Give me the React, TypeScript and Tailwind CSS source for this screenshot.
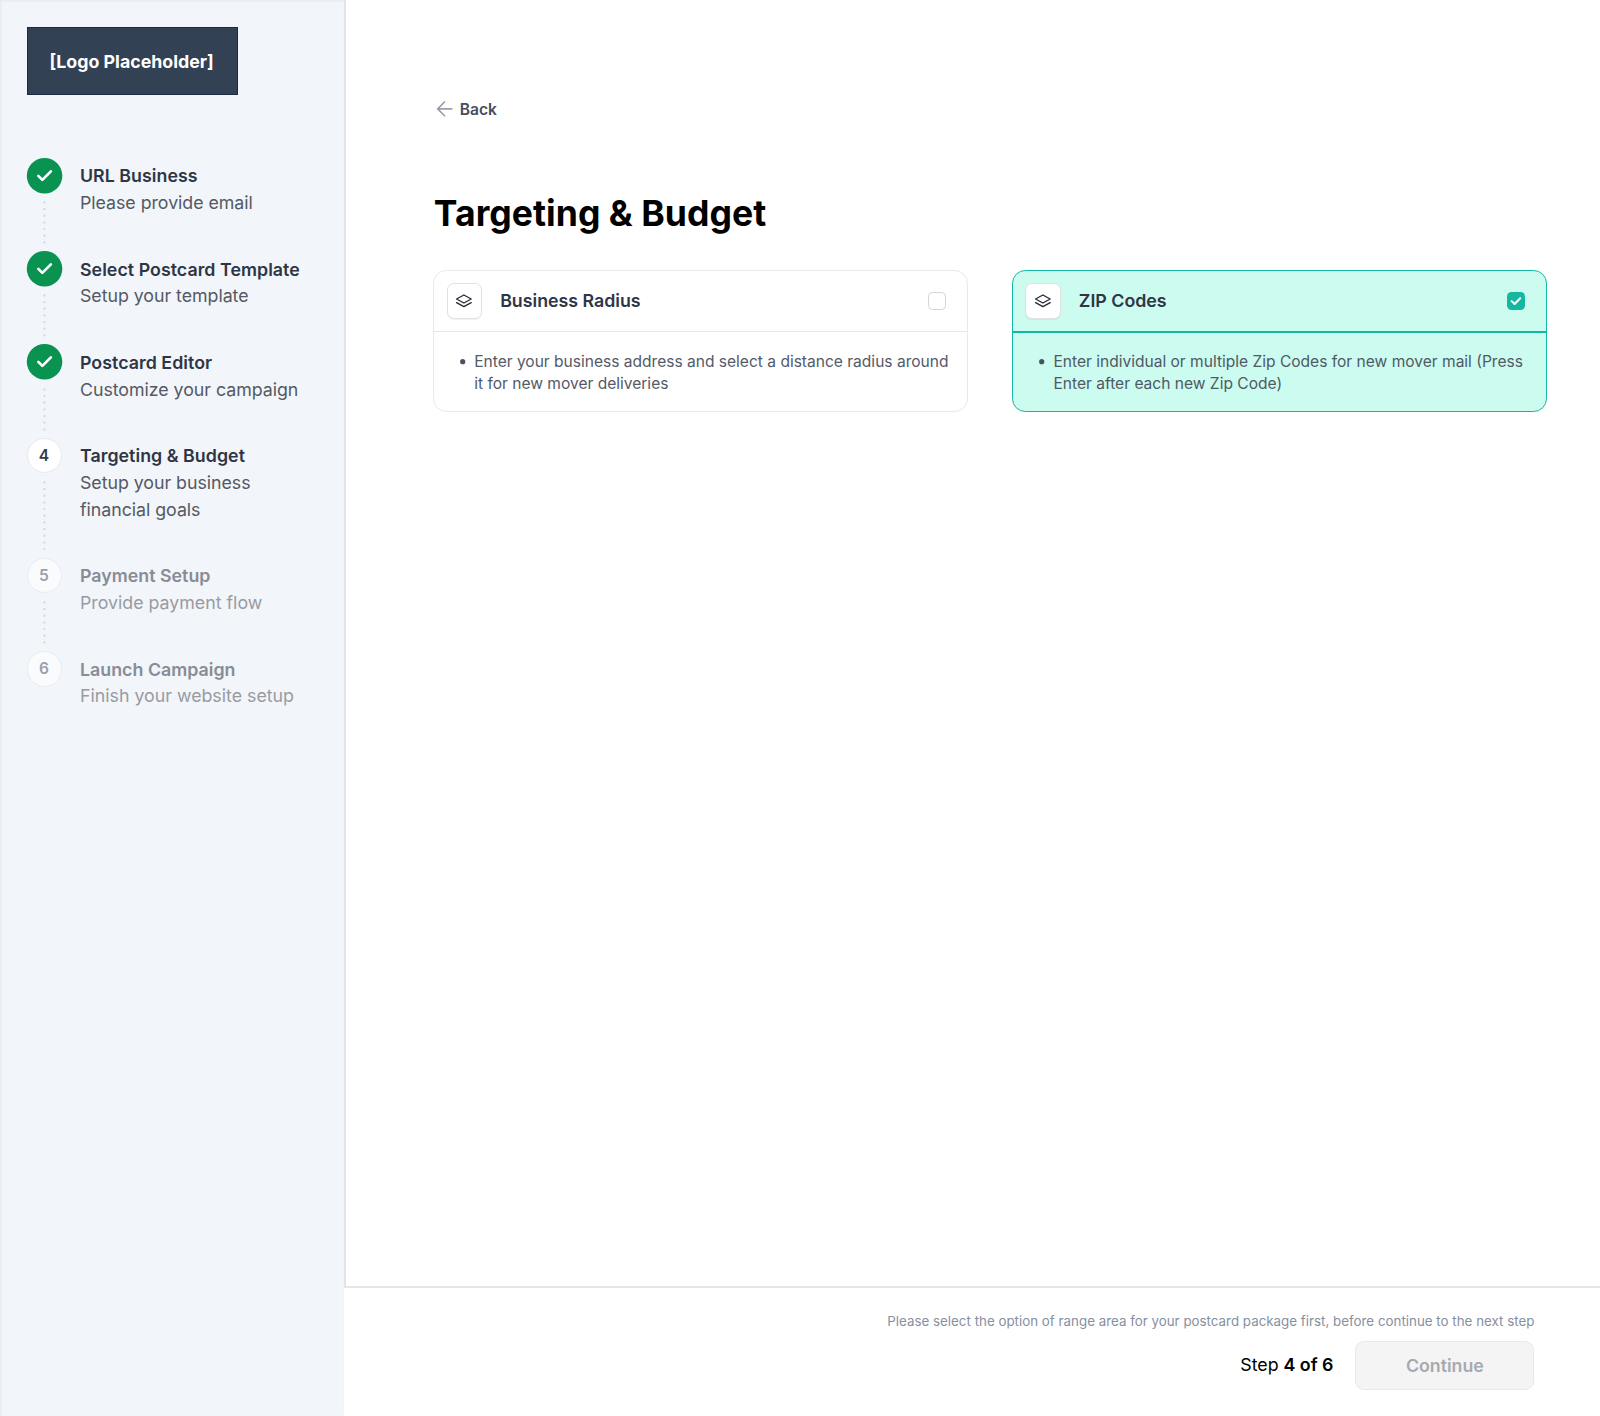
import React from "react";

type StepState = "done" | "current" | "upcoming";

interface Step {
  title: string;
  lines: string[];
  state: StepState;
}

const steps: Step[] = [
  { title: "URL Business", lines: ["Please provide email"], state: "done" },
  { title: "Select Postcard Template", lines: ["Setup your template"], state: "done" },
  { title: "Postcard Editor", lines: ["Customize your campaign"], state: "done" },
  { title: "Targeting & Budget", lines: ["Setup your business", "financial goals"], state: "current" },
  { title: "Payment Setup", lines: ["Provide payment flow"], state: "upcoming" },
  { title: "Launch Campaign", lines: ["Finish your website setup"], state: "upcoming" },
];

function StepMarker({ step, index }: { step: Step; index: number }) {
  if (step.state === "done") {
    return (
      <svg className="block size-[35.56px] shrink-0 overflow-visible" viewBox="0 0 32 32" fill="none">
        <circle cx="15.8" cy="16" r="16" fill="#099250" />
        <path d="M10.2 16.1l3.6 3.6 7.7-7.7" stroke="#fff" strokeWidth="2.4" strokeLinecap="round" strokeLinejoin="round" />
      </svg>
    );
  }
  const current = step.state === "current";
  return (
    <div
      className={
        current
          ? "flex size-[35.56px] shrink-0 items-center justify-center rounded-full border border-[#e6e9ee] bg-white pr-px text-[15.56px] font-semibold text-[#343a4a]"
          : "flex size-[35.56px] shrink-0 items-center justify-center rounded-full border border-[#e9ecf0] bg-[#fafbfd] pr-px text-[15.56px] font-semibold text-[#9c9fa9]"
      }
    >
      {index + 1}
    </div>
  );
}

function Dots({ count }: { count: number }) {
  return (
    <svg className="mt-[7.7px] block w-[4px]" height={count * 6.667} fill="#d5d8dc">
      {Array.from({ length: count }, (_, i) => (
        <circle key={i} cx="2.4" cy={1.4 + i * 6.667} r="1.15" />
      ))}
    </svg>
  );
}

function StepRow({ step, index }: { step: Step; index: number }) {
  const upcoming = step.state === "upcoming";
  const tall = step.lines.length > 1;
  return (
    <li className={tall ? "flex h-[120px] gap-[17.78px]" : "flex h-[93.33px] gap-[17.78px]"}>
      <div className="flex w-[35.56px] flex-col items-center">
        <StepMarker step={step} index={index} />
        {index < steps.length - 1 && <Dots count={tall ? 11 : 7} />}
      </div>
      <div className="pt-[5.5px] text-[17.78px] leading-[26.67px] whitespace-nowrap">
        <div className={upcoming ? "font-semibold tracking-[0.03px] text-[#888c95]" : "font-semibold tracking-[0.05px] text-[#2f3545]"}>{step.title}</div>
        {step.lines.map((line) => (
          <div key={line} className={upcoming ? "text-[#989ba2]" : "tracking-[-0.03px] text-[#545963]"}>
            {line}
          </div>
        ))}
      </div>
    </li>
  );
}

function LayersIcon() {
  return (
    <svg className="size-[17.78px]" viewBox="0 0 16 16" fill="none" stroke="#252b37" strokeWidth="1.2" strokeLinejoin="round" strokeLinecap="round">
      <path d="M8 2.7L14.6 6.3 8 9.9 1.4 6.3z" />
      <path d="M1.4 9.6L8 13.2l6.6-3.6" />
    </svg>
  );
}

interface OptionProps {
  title: string;
  lines: string[];
  selected?: boolean;
}

function OptionCard({ title, lines, selected = false }: OptionProps) {
  return (
    <section
      className={
        selected
          ? "h-[142px] w-[535px] rounded-[13.33px] border border-[#14b8a0] bg-[#ccfbef]"
          : "h-[142px] w-[535px] rounded-[13.33px] border border-[#e8e9eb] bg-white"
      }
    >
      <header
        className={
          selected
            ? "flex h-[62px] items-center border-b-2 border-[#14b8a0] pr-[21.5px] pl-[12.3px]"
            : "flex h-[61px] items-center border-b border-[#e6e7e9] pr-[21px] pl-[12.6px]"
        }
      >
        <div className="flex size-[35.56px] items-center justify-center rounded-[7px] border border-[#dfe1e4] bg-white shadow-[0_1px_1px_rgba(16,24,40,0.06)]">
          <LayersIcon />
        </div>
        <h2 className="ml-[18px] flex-1 pt-px text-[17.78px] font-semibold text-[#2f3545]">{title}</h2>
        {selected ? (
          <div className="flex size-[18px] items-center justify-center rounded-[4.5px] bg-[#14b8a0]">
            <svg className="size-[14px]" viewBox="0 0 14 14" fill="none">
              <path d="M2.7 7.1l2.9 2.9 5.6-5.8" stroke="#fff" strokeWidth="2" strokeLinecap="round" strokeLinejoin="round" />
            </svg>
          </div>
        ) : (
          <div className="size-[18px] rounded-[4.5px] border border-[#d2d4d9] bg-white" />
        )}
      </header>
      <div
        className={
          selected
            ? "flex pt-[18px] pl-[25.9px] text-[15.56px] leading-[22.22px] text-[#4f5a64]"
            : "flex pt-[19px] pl-[25.6px] text-[15.56px] leading-[22.22px] text-[#545a68]"
        }
      >
        <svg className="mt-[8px] size-[5.4px] shrink-0 overflow-visible" viewBox="0 0 6 6">
          <circle cx="3" cy="3" r="2.9" fill="#4b5160" />
        </svg>
        <p className="ml-[9.2px] whitespace-nowrap">
          {lines[0]}
          <br />
          {lines[1]}
        </p>
      </div>
    </section>
  );
}

export default function App() {
  return (
    <div className="flex h-[1416px] w-[1600px] overflow-hidden bg-white font-['Inter',sans-serif]">
      <aside className="w-[344px] shrink-0 bg-[#f2f5fa] pt-[26.67px] pl-[26.67px] shadow-[inset_1px_1px_3px_rgba(16,24,40,0.06)]">
        <div className="flex h-[68.4px] w-[211px] items-center justify-center border border-[#1b2b45] bg-[#334155] pt-[2px] pr-px text-[17.78px] font-bold text-white">
          [Logo Placeholder]
        </div>
        <ol className="mt-[62.7px]">
          {steps.map((step, i) => (
            <StepRow key={step.title} step={step} index={i} />
          ))}
        </ol>
      </aside>

      <div className="flex flex-1 flex-col">
        <main className="h-[1286px] border-l-2 border-[#e3e4e8] pt-[98px] pl-[87px]">
          <button className="flex h-[23px] items-center text-[15.56px] font-semibold text-[#474d5c]">
            <svg className="size-[22.22px]" viewBox="0 0 20 20" fill="none" stroke="#9b9ea6" strokeWidth="1.5" strokeLinecap="round" strokeLinejoin="round">
              <path d="M16.9 9.8H4.4M10.4 3.6L4.2 9.8l6.2 6.2" />
            </svg>
            <span className="ml-[4.6px]">Back</span>
          </button>
          <h1 className="mt-[70px] ml-[0.8px] h-[46px] text-[35.56px] leading-[46px] font-bold tracking-[0.04px] text-black">Targeting &amp; Budget</h1>
          <div className="mt-[33px] flex gap-[44px]">
            <OptionCard
              title="Business Radius"
              lines={["Enter your business address and select a distance radius around", "it for new mover deliveries"]}
            />
            <OptionCard
              selected
              title="ZIP Codes"
              lines={["Enter individual or multiple Zip Codes for new mover mail (Press", "Enter after each new Zip Code)"]}
            />
          </div>
        </main>
        <footer className="flex-1 border-t-2 border-[#e4e5e7] pt-[23px] pr-[65.6px]">
          <p className="text-right text-[13.33px] leading-[20px] tracking-[0.01px] text-[#8790a0]">
            Please select the option of range area for your postcard package first, before continue to the next step
          </p>
          <div className="mt-[10px] flex items-center justify-end gap-[22px]">
            <p className="text-[17.78px] text-black">
              Step <b className="font-semibold">4 of 6</b>
            </p>
            <button className="h-[49px] w-[179px] rounded-[8.89px] border border-[#e8e9ea] bg-[#f4f4f4] pt-px text-[17.78px] font-semibold text-[#a7a9b1]">
              Continue
            </button>
          </div>
        </footer>
      </div>
    </div>
  );
}
